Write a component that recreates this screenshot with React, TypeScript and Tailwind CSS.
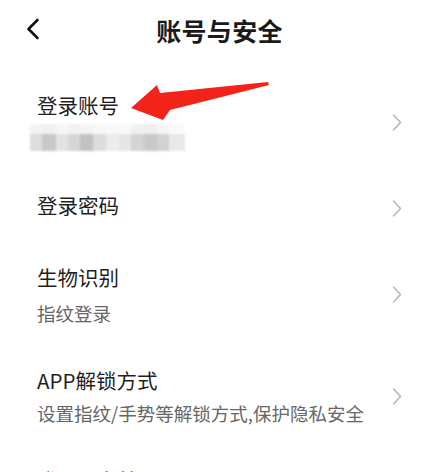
import React from "react";

const Chevron = () => (
  <svg width="10" height="17" viewBox="0 0 10 17" className="shrink-0">
    <path d="M1.5 1 L8.5 8.5 L1.5 16" fill="none" stroke="#b3b3b3" strokeWidth="1.4" strokeLinecap="round" strokeLinejoin="round" />
  </svg>
);

const topBlocks = [
  "bg-[#f3f3f3] w-[12px]",
  "bg-[#f0f0f0] w-[14px]",
  "bg-[#f6f6f6] w-[12px]",
  "bg-[#f2f2f2] w-[12px]",
  "bg-[#f4f4f4] w-[13px]",
  "bg-[#f7f7f7] w-[13px]",
  "bg-[#f8f8f8] w-[13px]",
  "bg-[#f9f9f9] w-[12px]",
  "bg-[#f1f1f1] w-[13px]",
  "bg-[#eeeeee] w-[13px]",
  "bg-[#f5f5f5] w-[12px]",
  "bg-[#fafafa] w-[16px]",
];
const bottomBlocks = [
  "bg-[#dddddd] w-[12px]",
  "bg-[#c8c8c8] w-[14px]",
  "bg-[#e2e2e2] w-[12px]",
  "bg-[#d6d6d6] w-[12px]",
  "bg-[#c2c2c2] w-[13px]",
  "bg-[#dcdcdc] w-[13px]",
  "bg-[#ececec] w-[13px]",
  "bg-[#e6e6e6] w-[12px]",
  "bg-[#d4d4d4] w-[13px]",
  "bg-[#c9c9c9] w-[13px]",
  "bg-[#d2d2d2] w-[12px]",
  "bg-[#e9e9e9] w-[16px]",
];

export default function App() {
  const font = "font-['Noto_Sans_CJK_SC','Noto_Sans',sans-serif]";
  return (
    <div className={`relative w-[439px] h-[472px] overflow-hidden bg-white ${font}`}>
      {/* header */}
      <div className="relative h-[60px] flex items-center justify-center">
        <svg width="16" height="22" viewBox="0 0 16 22" className="absolute left-[25px] top-[18px]">
          <path d="M12.5 2 L3.5 11 L12.5 20" fill="none" stroke="#111" strokeWidth="2.6" strokeLinecap="round" strokeLinejoin="round" />
        </svg>
        <span className="text-[25px] leading-none font-bold text-[#1a1a1a] tracking-[0.3px]">账号与安全</span>
      </div>

      <div className="flex flex-col pl-[37px] pr-[37px]">
        {/* row 1 */}
        <div className="flex items-center justify-between mt-[35px]">
          <div className="flex flex-col">
            <span className="text-[20.5px] leading-none text-[#1f1f1f]">登录账号</span>
            <div className="flex flex-col mt-[8px] -ml-[7px] blur-[1px]">
              <div className="flex h-[10px]">
                {topBlocks.map((c, i) => (
                  <div key={i} className={c} />
                ))}
              </div>
              <div className="flex h-[17px]">
                {bottomBlocks.map((c, i) => (
                  <div key={i} className={c} />
                ))}
              </div>
            </div>
          </div>
          <Chevron />
        </div>

        {/* row 2 */}
        <div className="flex items-center justify-between mt-[44px]">
          <span className="text-[20.5px] leading-none text-[#1f1f1f]">登录密码</span>
          <div className="mt-[5px]">
            <Chevron />
          </div>
        </div>

        {/* row 3 */}
        <div className="flex items-center justify-between mt-[50px]">
          <div className="flex flex-col">
            <span className="text-[20.5px] leading-none text-[#1f1f1f]">生物识别</span>
            <span className="text-[18.5px] leading-none text-[#666666] mt-[17px]">指纹登录</span>
          </div>
          <Chevron />
        </div>

        {/* row 4 */}
        <div className="flex items-center justify-between mt-[47px]">
          <div className="flex flex-col">
            <span className="text-[20.5px] leading-none text-[#1f1f1f]">APP解锁方式</span>
            <span className="text-[18.5px] leading-none text-[#666666] mt-[14px]">设置指纹/手势等解锁方式,保护隐私安全</span>
          </div>
          <Chevron />
        </div>

        {/* row 5 (cut off) */}
        <div className="flex items-center justify-between mt-[47px]">
          <span className="text-[20.5px] leading-none text-[#1f1f1f]">登录设备管理</span>
        </div>
      </div>

      {/* red annotation arrow */}
      <svg className="absolute left-0 top-0 pointer-events-none" width="439" height="472" viewBox="0 0 439 472">
        <polygon
          points="131,108 157,85 160,93 268,82 269,85 170,110 163,120"
          fill="#f4231a"
        />
      </svg>
    </div>
  );
}
